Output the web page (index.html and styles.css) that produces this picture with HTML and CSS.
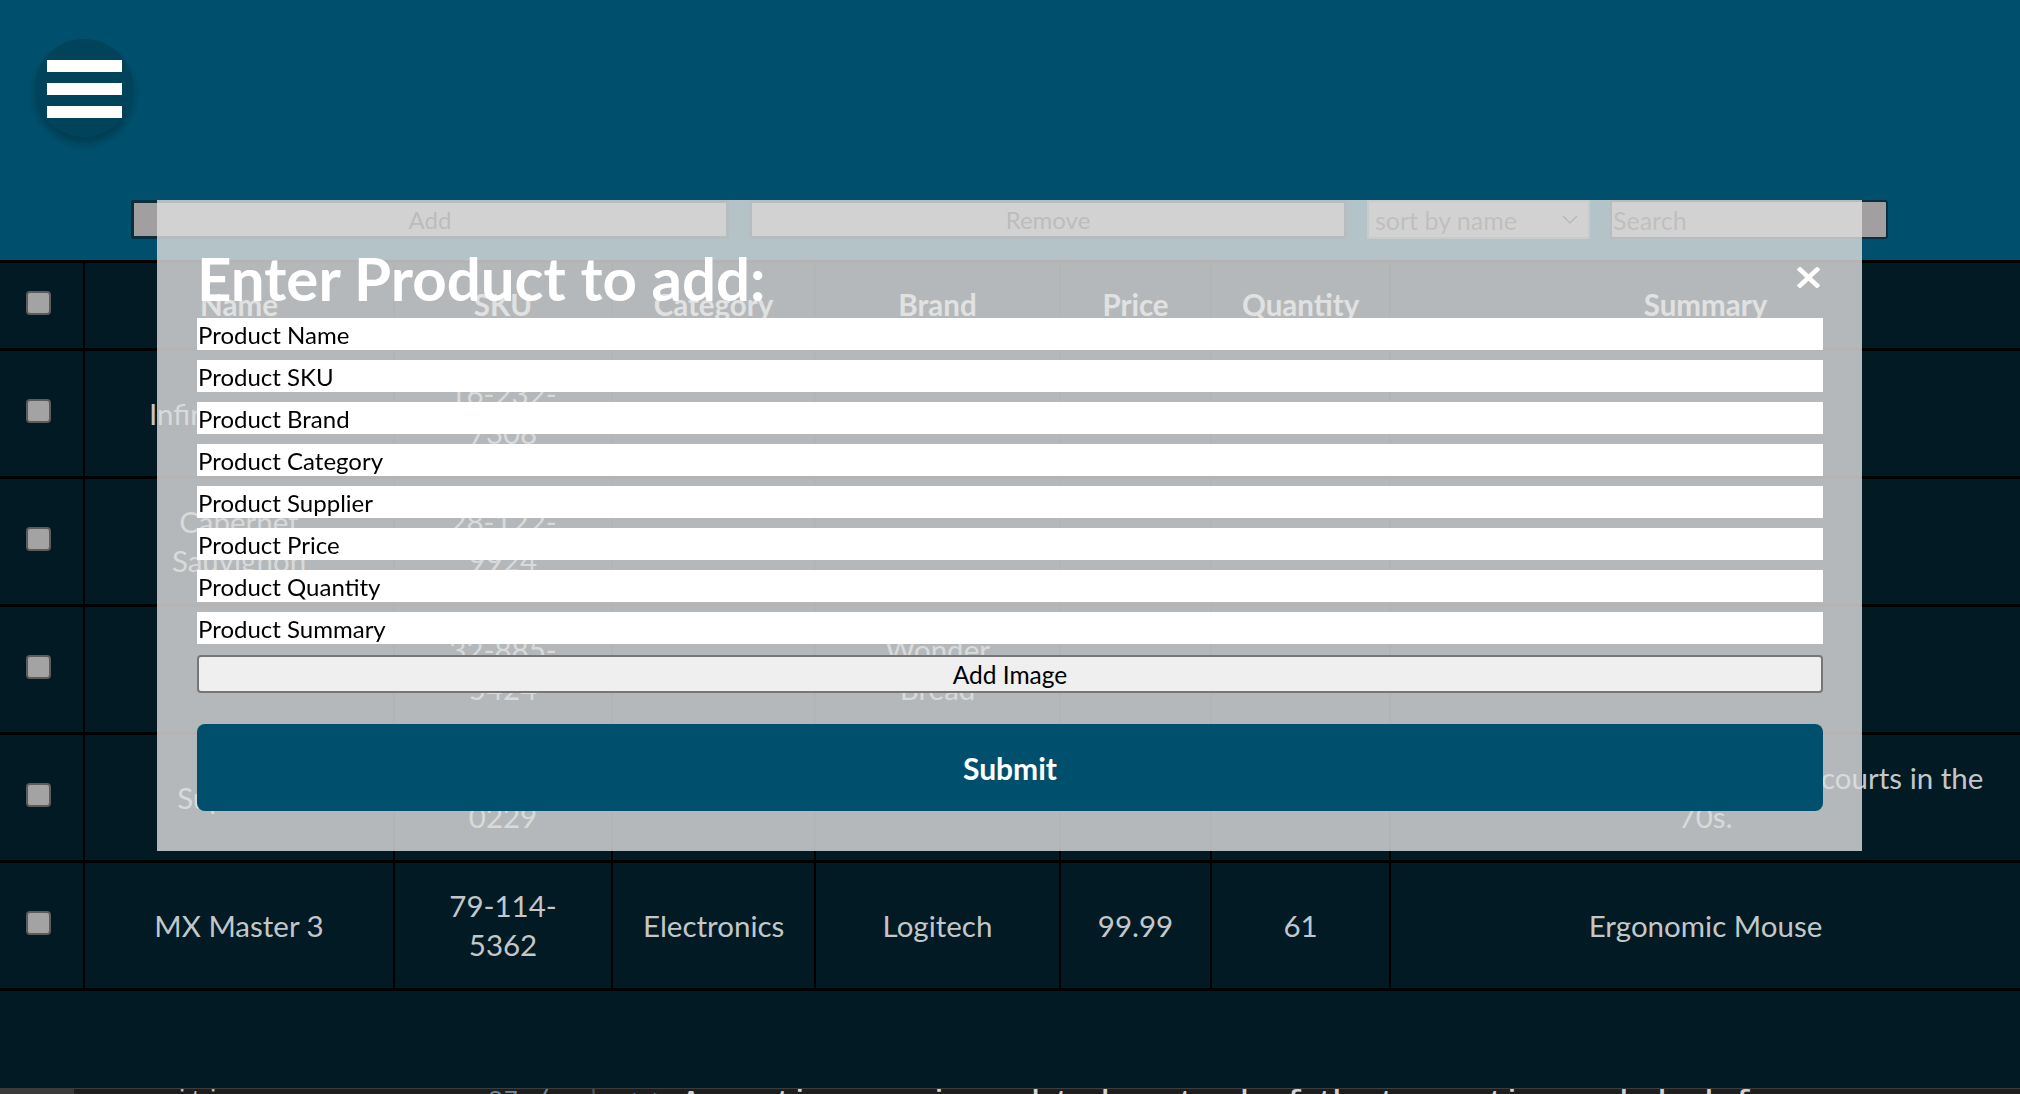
FILE: index.html
```html
<!DOCTYPE html>
<html lang="en">
<head>
<meta charset="utf-8">
<title>Inventory</title>
<link rel="stylesheet" href="styles.css">
</head>
<body>
<header class="topbar">
  <button class="menu-btn" aria-label="Menu">
    <span class="bar"></span><span class="bar"></span><span class="bar"></span>
  </button>
  <div class="toolbar">
    <button class="tool-btn">Add</button>
    <button class="tool-btn">Remove</button>
    <div class="select">
      <span class="select-label">sort by name</span>
      <svg class="chev" viewBox="0 0 16 10" width="16" height="10"><path d="M1 1 L8 8 L15 1" fill="none" stroke="#1c1c1c" stroke-width="1.5"/></svg>
    </div>
    <input class="search" type="text" placeholder="Search">
  </div>
</header>

<main>
  <table class="grid">
    <colgroup>
      <col class="c-check"><col class="c-name"><col class="c-sku"><col class="c-cat"><col class="c-brand"><col class="c-price"><col class="c-qty"><col class="c-sum">
    </colgroup>
    <thead>
      <tr><th class="chk"><span class="check"></span></th><th>Name</th><th>SKU</th><th>Category</th><th>Brand</th><th>Price</th><th>Quantity</th><th>Summary</th></tr>
    </thead>
    <tbody>
      <tr><td class="chk"><span class="check"></span></td><td>Infinity Mirror</td><td>16-232-7308</td><td>Decor</td><td>Umbra</td><td>89.99</td><td>12</td><td>LED mirror</td></tr>
      <tr><td class="chk"><span class="check"></span></td><td>Cabernet Sauvignon</td><td>28-122-9924</td><td>Wine</td><td>Caymus</td><td>54.99</td><td>40</td><td>Red wine</td></tr>
      <tr><td class="chk"><span class="check"></span></td><td>Bread</td><td>32-885-5424</td><td>Bakery</td><td>Wonder Bread</td><td>3.49</td><td>88</td><td>White bread</td></tr>
      <tr><td class="chk"><span class="check"></span></td><td>Superstar</td><td>81-406-0229</td><td>Shoes</td><td>Adidas</td><td>79.99</td><td>25</td><td>Classic shell-toe shoe seen on courts in the 70s.</td></tr>
      <tr><td class="chk"><span class="check"></span></td><td>MX Master 3</td><td>79-114-5362</td><td>Electronics</td><td>Logitech</td><td>99.99</td><td>61</td><td>Ergonomic Mouse</td></tr>
    </tbody>
  </table>
</main>

<form class="modal">
  <div class="modal-head">
    <h1 class="modal-title">Enter Product to add:</h1>
    <svg class="close" viewBox="0 0 23 21" width="23" height="21" aria-label="Close"><path d="M3 2.5 L20 18.5 M20 2.5 L3 18.5" stroke="#fff" stroke-width="4.6" stroke-linecap="square"/></svg>
  </div>
  <input class="field" type="text" placeholder="Product Name">
  <input class="field" type="text" placeholder="Product SKU">
  <input class="field" type="text" placeholder="Product Brand">
  <input class="field" type="text" placeholder="Product Category">
  <input class="field" type="text" placeholder="Product Supplier">
  <input class="field" type="text" placeholder="Product Price">
  <input class="field" type="text" placeholder="Product Quantity">
  <input class="field" type="text" placeholder="Product Summary">
  <button class="img-btn" type="button">Add Image</button>
  <button class="submit" type="button">Submit</button>
</form>

<div class="editor-strip">
  <span class="strip-tab"></span>
  <span class="strip-icon">&#9650;</span>
  <span class="strip-file">.gitignore</span>
  <span class="strip-num">87 /</span>
  <span class="strip-sep">|</span>
  <span class="strip-code"><span class="strip-tag">&lt;p&gt;</span> Accounting page is used to keep track of the transactions and check for</span>
</div>
</body>
</html>
```

FILE: styles.css
```css
* { box-sizing: border-box; }
html, body { margin: 0; padding: 0; }
body {
  width: 2020px;
  height: 1094px;
  overflow: hidden;
  background: #011a24;
  font-family: Lato, "Open Sans", sans-serif;
}

/* header */
.topbar {
  height: 260px;
  background: #00506d;
  padding: 39px 0 0 35px;
}
.menu-btn {
  width: 98px;
  height: 98px;
  border: 0;
  border-radius: 50%;
  background: #02435c;
  box-shadow: 0 6px 10px rgba(0, 0, 0, 0.28);
  display: flex;
  flex-direction: column;
  align-items: center;
  justify-content: center;
  gap: 11px;
  padding: 2px 0 0 1px;
}
.bar {
  display: block;
  width: 75px;
  height: 12px;
  background: #fff;
}
.toolbar {
  margin: 63px 0 0 96px;
  width: 1757px;
  height: 39px;
  display: flex;
  gap: 20px;
}
.tool-btn {
  flex: 1;
  height: 39px;
  border: 3px solid #0b2e3d;
  border-radius: 2px;
  background: #a19f9f;
  color: #2a2a2a;
  font-family: Lato, sans-serif;
  font-size: 24px;
  padding: 0;
}
.select {
  width: 223px;
  height: 39px;
  border: 2px solid #5f7c88;
  background: #a19f9f;
  display: flex;
  align-items: center;
  justify-content: space-between;
  padding: 0 10px 0 6px;
  color: #3a3a3a;
  font-size: 25px;
}
.search {
  width: 278px;
  height: 39px;
  border: 2px solid #0b2e3d;
  border-radius: 3px;
  background: #a19f9f;
  font-family: Lato, sans-serif;
  font-size: 25px;
  padding: 0 1px;
}
.search::placeholder { color: #3a3a3a; opacity: 1; }

/* table */
.grid {
  width: 2020px;
  border-collapse: collapse;
  table-layout: fixed;
  color: #c3c7c9;
  font-size: 29.5px;
  line-height: 39px;
  text-align: center;
}
.c-check { width: 84px; }
.c-name { width: 310px; }
.c-sku { width: 218px; }
.c-cat { width: 203px; }
.c-brand { width: 245px; }
.c-price { width: 151px; }
.c-qty { width: 179px; }
.c-sum { width: 630px; }
.grid th, .grid td {
  padding: 23px 30px 24px;
  border-bottom: 3px solid #000;
  border-left: 2px solid #000;
  vertical-align: middle;
}
.grid th:first-child, .grid td:first-child { border-left: 0; }
.grid thead th {
  padding-top: 22px;
  border-top: 3px solid #000;
  font-weight: 700;
  color: #eeeeee;
}
.grid .chk {
  text-align: left;
  padding-left: 26px;
  padding-right: 0;
}
.check {
  display: block;
  width: 25px;
  height: 24px;
  margin-top: -4px;
  background: #a3a3a3;
  border: 2px solid #5c5c5c;
  border-radius: 4px;
}

/* modal */
.modal {
  position: fixed;
  top: 200px;
  left: 157px;
  width: 1705px;
  margin: 0;
  padding: 0 39px 40px 40px;
  background: rgba(222, 222, 222, 0.81);
  display: flex;
  flex-direction: column;
  gap: 10px;
}
.modal-head {
  display: flex;
  justify-content: space-between;
  align-items: flex-start;
  padding-top: 48px;
}
.modal-title {
  margin: 0;
  font-size: 60px;
  line-height: 60px;
  font-weight: 700;
  color: #fff;
}
.close {
  margin: 19px 3px 0 0;
  display: block;
}
.field {
  height: 32px;
  border: 0;
  padding: 0 1px;
  background: #fff;
  font-family: Lato, sans-serif;
  font-size: 24px;
  color: #000;
}
.field::placeholder { color: #000; opacity: 1; }
.img-btn {
  margin-top: 1px;
  height: 38px;
  border: 2px solid #767676;
  border-radius: 4px;
  background: #efefef;
  font-family: Lato, sans-serif;
  font-size: 24.5px;
  color: #000;
}
.submit {
  margin-top: 21px;
  height: 87px;
  border: 0;
  border-radius: 8px;
  background: #00506d;
  color: #fff;
  font-family: Lato, sans-serif;
  font-size: 30px;
  font-weight: 700;
}

/* editor window peeking at the bottom edge */
.editor-strip {
  position: fixed;
  left: 0;
  right: 0;
  bottom: 0;
  height: 6px;
  overflow: hidden;
  background: #1e1e1e;
  border-top: 1px solid #3c3c3c;
  display: flex;
  align-items: flex-start;
  font-family: "Liberation Mono", monospace;
  font-size: 25.8px;
  line-height: 25px;
  color: #d4d4d4;
  white-space: nowrap;
}
.strip-tab { width: 74px; height: 6px; background: #3a3a3a; }
.strip-icon { margin-left: 35px; color: #6a6a6a; font-size: 20px; }
.strip-file { margin-left: 22px; color: #bbbbbb; }
.strip-num { margin-left: 190px; color: #6a8aa8; }
.strip-sep { margin-left: 36px; color: #555; }
.strip-code { margin-left: 20px; font-weight: 700; }
.strip-tag { color: #4e7fb8; font-weight: 400; }
```
